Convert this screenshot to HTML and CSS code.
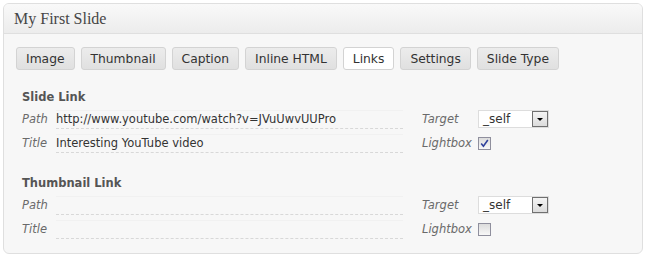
FILE: index.html
```html
<!DOCTYPE html>
<html lang="en">
<head>
    <meta charset="UTF-8">
    <title>My First Slide</title>
    <link rel="stylesheet" href="styles.css">
</head>
<body>
    <div class="postbox">
        <h3 class="hndle">My First Slide</h3>
        <div class="inside">
            <ul class="tabs">
                <li>Image</li>
                <li>Thumbnail</li>
                <li>Caption</li>
                <li>Inline HTML</li>
                <li class="active">Links</li>
                <li>Settings</li>
                <li>Slide Type</li>
            </ul>

            <!-- Slide link -->
            <div class="section">
                <h4>Slide Link</h4>
                <div class="row">
                    <span class="label">Path</span>
                    <span class="field">http://www.youtube.com/watch?v=JVuUwvUUPro</span>
                    <span class="label">Target</span>
                    <span class="select"><span class="value">_self</span><span class="arrow"></span></span>
                </div>
                <div class="row">
                    <span class="label">Title</span>
                    <span class="field">Interesting YouTube video</span>
                    <span class="label">Lightbox</span>
                    <span class="checkbox checked">
                        <svg width="9" height="9" viewBox="0 0 9 9"><path d="M1.2 4.6 L3.4 7.2 L7.8 1" fill="none" stroke="#30429c" stroke-width="1.6"/></svg>
                    </span>
                </div>
            </div>

            <!-- Thumbnail link -->
            <div class="section">
                <h4>Thumbnail Link</h4>
                <div class="row">
                    <span class="label">Path</span>
                    <span class="field"></span>
                    <span class="label">Target</span>
                    <span class="select"><span class="value">_self</span><span class="arrow"></span></span>
                </div>
                <div class="row">
                    <span class="label">Title</span>
                    <span class="field"></span>
                    <span class="label">Lightbox</span>
                    <span class="checkbox"></span>
                </div>
            </div>
        </div>
    </div>
</body>
</html>
```

FILE: styles.css
```css
body {
    margin: 3px;
    background: #fff;
    font-family: "DejaVu Sans", Verdana, sans-serif;
}
.postbox {
    width: 638px;
    height: 249px;
    border: 1px solid #dfdfdf;
    border-radius: 6px;
    background: #f7f7f7;
    overflow: hidden;
}
.hndle {
    margin: 0;
    height: 29px;
    padding: 0 10px;
    line-height: 30px;
    font-family: "Liberation Serif", Georgia, serif;
    font-size: 16px;
    font-weight: normal;
    color: #464646;
    background: linear-gradient(#f9f9f9, #ececec);
    border-bottom: 1px solid #dfdfdf;
}
.inside {
    padding: 13px 12px 0;
}
.tabs {
    list-style: none;
    margin: 0;
    padding: 0;
    display: flex;
    gap: 6px;
}
.tabs li {
    height: 21px;
    line-height: 22px;
    padding: 0 9px;
    font-size: 12.3px;
    color: #333;
    background: linear-gradient(#ececec, #e0e0e0);
    border: 1px solid #d3d3d3;
    border-radius: 3px;
}
.tabs li.active {
    background: #fff;
}
.section {
    padding: 20px 6px 0;
}
.section + .section {
    padding-top: 21px;
}
.section h4 {
    margin: 0 0 3px;
    font-size: 11.5px;
    line-height: 14px;
    font-weight: bold;
    color: #555;
}
.row {
    display: grid;
    grid-template-columns: 34px 347px 19px 56px auto;
    align-items: center;
    height: 24px;
    font-size: 11.5px;
}
.row .label {
    font-style: italic;
    color: #6a6a6a;
}
.row .label:nth-child(3) {
    grid-column: 4;
}
.field {
    grid-column: 2;
    height: 17px;
    line-height: 16px;
    margin-top: 1px;
    color: #333;
    border-bottom: 1px dashed #d8d8d8;
    border-top: 1px solid #f1f1f1;
    white-space: nowrap;
}
.select {
    position: relative;
    width: 69px;
    height: 16px;
    background: #fff;
    border: 1px solid #ddd;
    color: #333;
    font-size: 12px;
    line-height: 16px;
}
.select .value {
    padding-left: 4px;
}
.select .arrow {
    position: absolute;
    top: 0;
    right: 0;
    width: 14px;
    height: 14px;
    border: 1px solid #707070;
    background: linear-gradient(#f4f4f4, #dcdcdc);
}
.select .arrow::after {
    content: "";
    position: absolute;
    left: 4px;
    top: 6px;
    border-left: 3px solid transparent;
    border-right: 3px solid transparent;
    border-top: 3px solid #000;
}
.checkbox {
    display: flex;
    align-items: center;
    justify-content: center;
    width: 11px;
    height: 11px;
    border: 1px solid #8f8f9d;
    background: linear-gradient(#dcdcdc, #f8f8f8);
}
```
